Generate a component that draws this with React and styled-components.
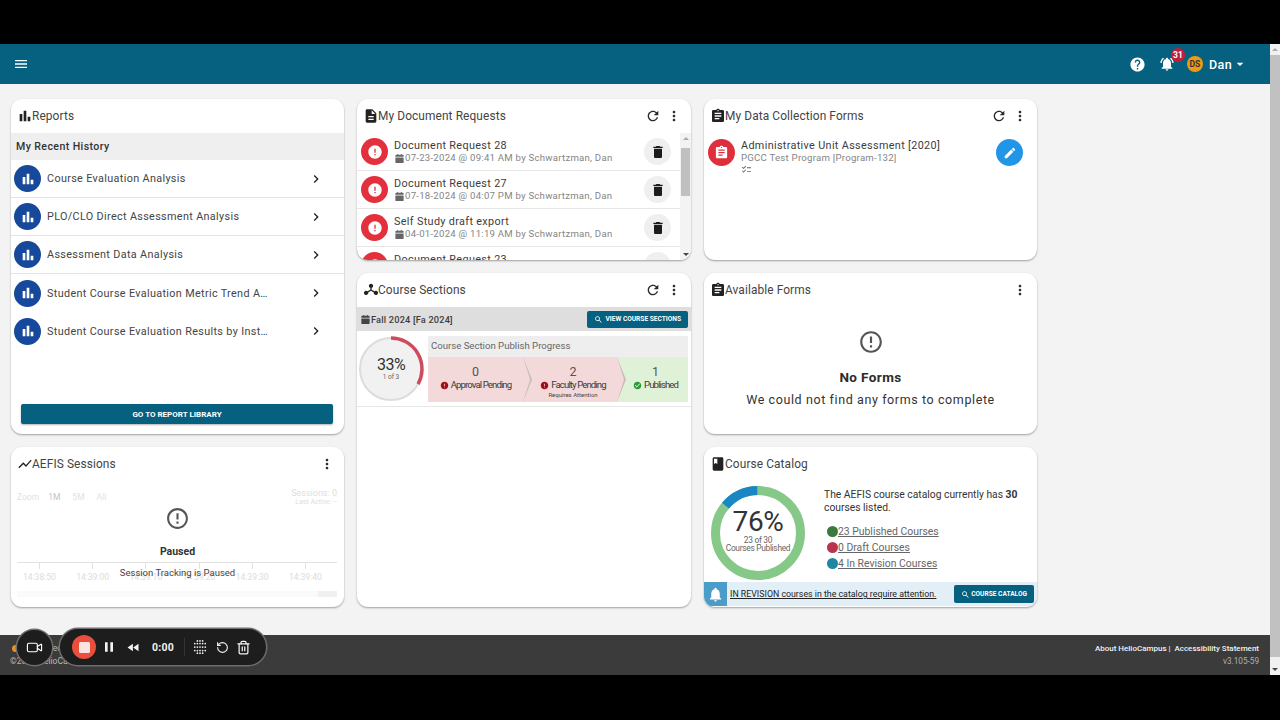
import React from 'react';
import styled, { createGlobalStyle } from 'styled-components';
import { Video, RotateCcw, Trash2 } from 'lucide-react';

const GlobalStyle = createGlobalStyle`
  html, body { margin: 0; padding: 0; height: 720px; overflow: hidden; background: #000; }
  * { box-sizing: border-box; }
  body { font-family: Roboto, "Liberation Sans", sans-serif; color: #333; }
`;

const PATHS = {
  menu: 'M3 18h18v-2H3v2zm0-5h18v-2H3v2zm0-7v2h18V6H3z',
  bars: 'M4 9h4v11H4zM10 4h4v16h-4zM16 13h4v7h-4z',
  doc: 'M14 2H6c-1.1 0-1.99.9-1.99 2L4 20c0 1.1.89 2 1.99 2H18c1.1 0 2-.9 2-2V8l-6-6zm2 16H8v-2h8v2zm0-4H8v-2h8v2zm-3-5V3.5L18.5 9H13z',
  refresh: 'M17.65 6.35C16.2 4.9 14.21 4 12 4c-4.42 0-7.99 3.58-7.99 8s3.57 8 7.99 8c3.73 0 6.84-2.55 7.73-6h-2.08c-.82 2.33-3.04 4-5.65 4-3.31 0-6-2.69-6-6s2.69-6 6-6c1.66 0 3.14.69 4.22 1.78L13 11h7V4l-2.35 2.35z',
  more: 'M12 8c1.1 0 2-.9 2-2s-.9-2-2-2-2 .9-2 2 .9 2 2 2zm0 2c-1.1 0-2 .9-2 2s.9 2 2 2 2-.9 2-2-.9-2-2-2zm0 6c-1.1 0-2 .9-2 2s.9 2 2 2 2-.9 2-2-.9-2-2-2z',
  clipboard: 'M19 3h-4.18C14.4 1.84 13.3 1 12 1c-1.3 0-2.4.84-2.82 2H5c-1.1 0-2 .9-2 2v14c0 1.1.9 2 2 2h14c1.1 0 2-.9 2-2V5c0-1.1-.9-2-2-2zm-7 0c.55 0 1 .45 1 1s-.45 1-1 1-1-.45-1-1 .45-1 1-1zm2 14H7v-2h7v2zm3-4H7v-2h10v2zm0-4H7V7h10v2z',
  trash: 'M6 19c0 1.1.9 2 2 2h8c1.1 0 2-.9 2-2V7H6v12zM19 4h-3.5l-1-1h-5l-1 1H5v2h14V4z',
  chevron: 'M10 6L8.59 7.41 13.17 12l-4.58 4.59L10 18l6-6z',
  error: 'M12 2C6.48 2 2 6.48 2 12s4.48 10 10 10 10-4.48 10-10S17.52 2 12 2zm1 15h-2v-2h2v2zm0-4h-2V7h2v6z',
  errorOutline: 'M11 15h2v2h-2zm0-8h2v6h-2zm.99-5C6.47 2 2 6.48 2 12s4.47 10 9.99 10C17.52 22 22 17.52 22 12S17.52 2 11.99 2zM12 20c-4.42 0-8-3.58-8-8s3.58-8 8-8 8 3.58 8 8-3.58 8-8 8z',
  edit: 'M3 17.25V21h3.75L17.81 9.94l-3.75-3.75L3 17.25zM20.71 7.04c.39-.39.39-1.02 0-1.41l-2.34-2.34c-.39-.39-1.02-.39-1.41 0l-1.83 1.83 3.75 3.75 1.83-1.83z',
  calendar: 'M7 2h2v2h6V2h2v2h2c1.1 0 2 .9 2 2v2H3V6c0-1.1.9-2 2-2h2V2zM3 10h18v10c0 1.1-.9 2-2 2H5c-1.1 0-2-.9-2-2V10z',
  search: 'M15.5 14h-.79l-.28-.27C15.41 12.59 16 11.11 16 9.5 16 5.91 13.09 3 9.5 3S3 5.91 3 9.5 5.91 16 9.5 16c1.61 0 3.09-.59 4.23-1.57l.27.28v.79l5 4.99L20.49 19l-4.99-5zm-6 0C7.01 14 5 11.99 5 9.5S7.01 5 9.5 5 14 7.01 14 9.5 11.99 14 9.5 14z',
  bell: 'M12 22c1.1 0 2-.9 2-2h-4c0 1.1.89 2 2 2zm6-6v-5c0-3.07-1.64-5.64-4.5-6.32V4c0-.83-.67-1.5-1.5-1.5s-1.5.67-1.5 1.5v.68C7.63 5.36 6 7.92 6 11v5l-2 2v1h16v-1l-2-2z',
  bellRing: 'M12 22c1.1 0 2-.9 2-2h-4c0 1.1.89 2 2 2zm6-6v-5c0-3.07-1.64-5.64-4.5-6.32V4c0-.83-.67-1.5-1.5-1.5s-1.5.67-1.5 1.5v.68C7.63 5.36 6 7.92 6 11v5l-2 2v1h16v-1l-2-2zM7.58 4.08L6.15 2.65C3.75 4.48 2.17 7.3 2.03 10.5h2c.15-2.65 1.51-4.97 3.55-6.42zM19.97 10.5h2c-.15-3.2-1.73-6.02-4.12-7.85l-1.42 1.43c2.02 1.45 3.39 3.77 3.54 6.42z',
  help: 'M12 2C6.48 2 2 6.48 2 12s4.48 10 10 10 10-4.48 10-10S17.52 2 12 2zm1 17h-2v-2h2v2zm2.07-7.75l-.9.92C13.45 12.9 13 13.5 13 15h-2v-.5c0-1.1.45-2.1 1.17-2.83l1.24-1.26c.37-.36.59-.86.59-1.41 0-1.1-.9-2-2-2s-2 .9-2 2H8c0-2.21 1.79-4 4-4s4 1.79 4 4c0 .88-.36 1.68-.93 2.25z',
  trend: 'M3.5 18.49l6-6.01 4 4L22 6.92l-1.41-1.41-7.09 7.97-4-4L2 16.99z',
  book: 'M18 2H6c-1.1 0-2 .9-2 2v16c0 1.1.9 2 2 2h12c1.1 0 2-.9 2-2V4c0-1.1-.9-2-2-2zM6 4h5v8l-2.5-1.5L6 12V4z',
  check: 'M12 2C6.48 2 2 6.48 2 12s4.48 10 10 10 10-4.48 10-10S17.52 2 12 2zm-2 15l-5-5 1.41-1.41L10 14.17l7.59-7.59L19 8l-9 9z',
  list: 'M22 7h-9v2h9V7zm0 8h-9v2h9v-2zM5.54 11L2 7.46l1.41-1.41 2.12 2.12 4.24-4.24 1.41 1.41L5.54 11zm0 8L2 15.46l1.41-1.41 2.12 2.12 4.24-4.24 1.41 1.41L5.54 19z',
  hub: 'M12 2.5a3.2 3.2 0 0 1 1 6.24V11.5l4.2 2.4a3.2 3.2 0 1 1-1 1.74L12 13.2l-4.2 2.44a3.2 3.2 0 1 1-1-1.74l4.2-2.4V8.74A3.2 3.2 0 0 1 12 2.5z',
  caret: 'M7 10l5 5 5-5z',
  pause: 'M6 5h4v14H6zM14 5h4v14h-4z',
  rewind: 'M11 18V6l-8.5 6 8.5 6zm.5-6l8.5 6V6l-8.5 6z',
};

const Svg = styled.svg`
  display: block;
  flex: none;
  width: ${(p) => p.$size || 16}px;
  height: ${(p) => p.$size || 16}px;
  fill: ${(p) => p.$color || 'currentColor'};
`;

const Icon = ({ name, size, color }) => (
  <Svg viewBox="0 0 24 24" $size={size} $color={color}>
    <path d={PATHS[name]} />
  </Svg>
);

const Screen = styled.div`
  width: 1280px;
  height: 720px;
  padding: 44px 0 45px;
  background: #000;
  position: relative;
  overflow: hidden;
`;

const Frame = styled.div`
  height: 631px;
  display: flex;
  background: #f3f3f3;
`;

const Main = styled.div`
  flex: 1;
  min-width: 0;
  display: flex;
  flex-direction: column;
`;

const TopBar = styled.header`
  height: 40px;
  flex: none;
  background: #06607f;
  color: #fff;
  display: flex;
  align-items: center;
  padding: 0 22px 0 13px;
`;

const TopSpacer = styled.div`
  flex: 1;
`;

const HelpButton = styled.div`
  margin-right: 13px;
`;

const BellWrap = styled.div`
  position: relative;
  margin-right: 12px;
`;

const Badge = styled.span`
  position: absolute;
  top: -8px;
  left: 12px;
  width: 14px;
  height: 14px;
  border-radius: 50%;
  background: #c0203a;
  color: #fff;
  font-size: 8.5px;
  font-weight: 700;
  display: flex;
  align-items: center;
  justify-content: center;
`;

const Avatar = styled.span`
  width: 16px;
  height: 16px;
  border-radius: 50%;
  background: #ee9a17;
  color: #333;
  font-size: 8.5px;
  font-weight: 700;
  display: flex;
  align-items: center;
  justify-content: center;
  margin-right: 6px;
`;

const UserName = styled.span`
  font-size: 12.5px;
  font-weight: 500;
  letter-spacing: 0.4px;
`;

const Grid = styled.main`
  flex: 1;
  display: grid;
  grid-template-columns: 333px 334px 333px;
  grid-template-rows: 161px 161px 160px;
  column-gap: 13px;
  row-gap: 13px;
  padding: 15px 0 0 11px;
`;

const Card = styled.section`
  background: #fff;
  border-radius: 11px;
  box-shadow: 0 1px 2px rgba(0, 0, 0, 0.35);
  overflow: hidden;
  display: flex;
  flex-direction: column;
  position: relative;
  grid-row: ${(p) => p.$row || 'auto'};
  grid-column: ${(p) => p.$col};
`;

const CardHead = styled.div`
  height: 34px;
  flex: none;
  display: flex;
  align-items: center;
  padding: 0 7px 1px 6px;
  color: #222;
`;

const CardTitle = styled.h2`
  margin: 0 0 0 -1px;
  flex: 1;
  font-size: 11.9px;
  font-weight: 400;
  letter-spacing: 0.1px;
  color: #444;
`;

const HeadAction = styled.span`
  width: 21px;
  display: flex;
  justify-content: center;
  color: #2a2a2a;
`;

const HistoryLabel = styled.div`
  height: 27px;
  flex: none;
  background: #efefef;
  padding-left: 5px;
  font-size: 10.6px;
  font-weight: 500;
  letter-spacing: 0.4px;
  line-height: 27px;
  color: #333;
`;

const ReportRow = styled.div`
  height: 38px;
  flex: none;
  display: flex;
  align-items: center;
  padding: 0 20px 0 3px;
  border-bottom: 1px solid #e4e4e4;
  &:nth-of-type(n + 6) {
    border-bottom: none;
  }
`;

const RoundIcon = styled.span`
  width: 27px;
  height: 27px;
  flex: none;
  border-radius: 50%;
  background: ${(p) => p.$bg};
  color: ${(p) => p.$fg || '#fff'};
  display: flex;
  align-items: center;
  justify-content: center;
`;

const ReportName = styled.span`
  flex: 1;
  min-width: 0;
  margin: 0 37px 0 6px;
  font-size: 10.8px;
  line-height: 13px;
  letter-spacing: 0.35px;
  color: #444;
  white-space: nowrap;
  overflow: hidden;
  text-overflow: ellipsis;
`;

const ReportFoot = styled.div`
  margin-top: auto;
  padding: 0 11px 10px 10px;
`;

const WideButton = styled.div`
  height: 20px;
  background: #06607f;
  border-radius: 2px;
  color: #fff;
  font-size: 8px;
  font-weight: 700;
  display: flex;
  align-items: center;
  justify-content: center;
  box-shadow: 0 1px 2px rgba(0, 0, 0, 0.3);
`;

const ScrollArea = styled.div`
  flex: 1;
  min-height: 0;
  display: flex;
`;

const RequestList = styled.div`
  flex: 1;
  min-width: 0;
  overflow: hidden;
`;

const RequestRow = styled.div`
  height: 38px;
  display: flex;
  align-items: center;
  padding: 0 9px 0 4px;
  border-bottom: 1px solid #e6e6e6;
`;

const FormRow = styled.div`
  display: flex;
  align-items: flex-start;
  padding: 6px 14px 0 4px;
`;

const RequestText = styled.div`
  flex: 1;
  min-width: 0;
  margin-left: 6px;
`;

const RequestTitle = styled.div`
  font-size: 10.8px;
  letter-spacing: 0.35px;
  line-height: 13px;
  color: #3c3c3c;
`;

const RequestMeta = styled.div`
  display: flex;
  align-items: center;
  font-size: 9.6px;
  letter-spacing: 0.25px;
  line-height: 12px;
  color: #858585;
`;

const ScrollTrack = styled.div`
  width: 11px;
  flex: none;
  background: #f3f3f3;
  display: flex;
  flex-direction: column;
  align-items: center;
`;

const ScrollThumb = styled.div`
  width: 9px;
  height: 48px;
  margin-top: 8px;
  background: #c0c0c0;
`;

const TrackArrow = styled.span`
  width: 0;
  height: 0;
  margin-top: ${(p) => (p.$down ? 'auto' : '4px')};
  margin-bottom: ${(p) => (p.$down ? '4px' : '0')};
  border-left: 3px solid transparent;
  border-right: 3px solid transparent;
  border-bottom: ${(p) => (p.$down ? 'none' : '3px solid #aaa')};
  border-top: ${(p) => (p.$down ? '3px solid #444' : 'none')};
`;

const TermBar = styled.div`
  height: 24px;
  flex: none;
  background: #dedede;
  display: flex;
  align-items: center;
  justify-content: space-between;
  padding: 0 3px;
  color: #3c3c3c;
`;

const TermLabel = styled.span`
  display: flex;
  align-items: center;
  font-size: 9.2px;
  font-weight: 500;
  letter-spacing: 0.2px;
`;

const SmallButton = styled.span`
  height: ${(p) => p.$h || 17}px;
  padding: 0 ${(p) => p.$pad || 7}px;
  background: #06607f;
  border-radius: 2px;
  color: #fff;
  font-size: 6.6px;
  font-weight: 700;
  display: flex;
  align-items: center;
  gap: ${(p) => p.$gap || 3}px;
  white-space: nowrap;
`;

const ProgressRow = styled.div`
  display: flex;
  align-items: flex-start;
  padding: 5px 3px 5px 1px;
  border-bottom: 1px solid #e6e6e6;
  height: 76px;
  flex: none;
`;

const Ring = styled.div`
  width: ${(p) => p.$size}px;
  height: ${(p) => p.$size}px;
  flex: none;
  position: relative;
`;

const RingLabel = styled.div`
  position: absolute;
  inset: 0;
  display: flex;
  flex-direction: column;
  align-items: center;
  justify-content: center;
  color: #333;
`;

const RingValue = styled.span`
  font-size: ${(p) => p.$size}px;
  line-height: 1;
  letter-spacing: ${(p) => p.$track || '-0.5px'};
  margin-top: ${(p) => p.$top || 0}px;
`;

const RingNote = styled.span`
  font-size: ${(p) => p.$size || 6.5}px;
  line-height: ${(p) => p.$line || '9px'};
  letter-spacing: ${(p) => p.$track || '0'};
  color: #666;
  text-align: center;
`;

const ProgressPanel = styled.div`
  flex: 1;
  margin-left: 4px;
  height: 66px;
  background: #eee;
  display: flex;
  flex-direction: column;
`;

const ProgressTitle = styled.div`
  height: 21px;
  flex: none;
  font-size: 9.6px;
  line-height: 20px;
  color: #666;
  padding-left: 3px;
`;

const Steps = styled.div`
  flex: 1;
  display: grid;
  grid-template-columns: 95px 94px 71px;
`;

const Step = styled.div`
  position: relative;
  background: ${(p) => (p.$done ? '#dff2d8' : '#f3d9d9')};
  color: #444;
  display: flex;
  flex-direction: column;
  align-items: center;
  padding-top: 8px;
  & + & {
    padding-left: 6px;
  }
  &::before,
  &::after {
    content: '';
    display: ${(p) => (p.$done ? 'none' : 'block')};
    position: absolute;
    top: 0;
    bottom: 0;
    z-index: 1;
    clip-path: polygon(0 0, 100% 50%, 0 100%);
  }
  &::before {
    right: -9px;
    width: 9px;
    background: #c9bcbc;
  }
  &::after {
    right: -7px;
    width: 7px;
    background: #f3d9d9;
  }
`;

const StepCount = styled.span`
  font-size: 12.5px;
  line-height: 14px;
  color: #555;
`;

const StepName = styled.span`
  display: flex;
  align-items: center;
  gap: 2px;
  font-size: 9.6px;
  line-height: 12px;
  letter-spacing: -0.9px;
  color: #3a3a3a;
`;

const StepHint = styled.span`
  font-size: 6px;
  line-height: 8px;
  color: #444;
`;

const EmptyState = styled.div`
  flex: 1;
  display: flex;
  flex-direction: column;
  align-items: center;
  padding-top: 22px;
`;

const EmptyTitle = styled.div`
  margin-top: 14px;
  font-size: 13.5px;
  font-weight: 700;
  letter-spacing: 0.4px;
  color: #2c2c2c;
`;

const EmptyText = styled.div`
  margin-top: 7px;
  font-size: 12.5px;
  letter-spacing: 0.6px;
  color: #333;
`;

const SessionBody = styled.div`
  flex: 1;
  position: relative;
  padding: 7px 7px 0 6px;
`;

const FaintRow = styled.div`
  display: flex;
  justify-content: space-between;
  font-size: 8.5px;
`;

const ZoomGroup = styled.div`
  display: flex;
  gap: 12px;
  padding-top: 4px;
`;

const ZoomItem = styled.span`
  color: ${(p) => (p.$on ? '#c4c4c4' : '#e2e2e2')};
  &:first-child {
    margin-right: -3px;
  }
`;

const SessionCount = styled.div`
  text-align: right;
  font-size: 9px;
  line-height: 10px;
  color: #e0e0e0;
`;

const SessionSub = styled.div`
  font-size: 7px;
  line-height: 8px;
`;

const Axis = styled.div`
  margin-top: 56px;
  border-top: 1px solid #e2e2e2;
  display: grid;
  grid-template-columns: repeat(6, 53.2px);
  padding-left: 6px;
`;

const Tick = styled.span`
  font-size: 8.5px;
  color: #dcdcdc;
  padding-top: 9px;
  position: relative;
  &::before {
    content: '';
    position: absolute;
    top: 0;
    left: 16px;
    width: 1px;
    height: 6px;
    background: #e2e2e2;
  }
`;

const RangeBar = styled.div`
  margin-top: 9px;
  height: 6px;
  background: linear-gradient(to right, #fafafa 0 94%, #f0f0f0 94%);
`;

const PausedOverlay = styled.div`
  position: absolute;
  inset: 0;
  display: flex;
  flex-direction: column;
  align-items: center;
  padding-top: 25px;
`;

const PausedTitle = styled.div`
  margin-top: 14px;
  font-size: 10.5px;
  font-weight: 700;
  color: #333;
`;

const PausedText = styled.div`
  margin-top: 9px;
  font-size: 9.5px;
  color: #444;
`;

const CatalogBody = styled.div`
  flex: 1;
  min-height: 0;
  display: flex;
  padding: 5px 6px 0 7px;
`;

const CatalogInfo = styled.div`
  margin-left: 19px;
  padding-top: 2px;
  flex: 1;
  min-width: 0;
`;

const CatalogText = styled.p`
  margin: 0 0 9px;
  font-size: 10.3px;
  line-height: 13px;
  color: #333;
`;

const CatalogLink = styled.div`
  display: flex;
  align-items: center;
  height: 16px;
  padding-left: 3px;
  font-size: 10.4px;
  color: #666;
  text-decoration: underline;
`;

const Dot = styled.span`
  width: 11px;
  height: 11px;
  flex: none;
  border-radius: 50%;
  background: ${(p) => p.$color};
`;

const RevisionBar = styled.div`
  height: 24px;
  flex: none;
  margin-bottom: 1px;
  background: #e2eff6;
  display: flex;
  align-items: center;
  padding-right: 3px;
`;

const RevisionIcon = styled.span`
  width: 23px;
  height: 24px;
  background: #4a9cc9;
  color: #fff;
  display: flex;
  align-items: center;
  justify-content: center;
`;

const RevisionText = styled.span`
  flex: 1;
  margin-left: 3px;
  font-size: 8.8px;
  color: #222;
  text-decoration: underline;
`;

const Footer = styled.footer`
  height: 40px;
  flex: none;
  background: #3b3b3b;
  color: #fff;
  display: flex;
  justify-content: space-between;
  padding: 7px 11px 0 10px;
`;

const FooterLeft = styled.div`
  font-size: 8.5px;
  line-height: 13px;
  color: #b9b9b9;
`;

const PoweredLine = styled.div`
  display: flex;
  align-items: center;
  gap: 10px;
  height: 13px;
  padding-left: 2px;
`;

const Flame = styled.span`
  width: 7px;
  height: 7px;
  border-radius: 50%;
  background: #e6952a;
`;

const FooterRight = styled.div`
  text-align: right;
  font-size: 8px;
  line-height: 13px;
`;

const FooterLinks = styled.div`
  font-weight: 500;
  color: #f1f1f1;
`;

const Version = styled.div`
  font-size: 8.2px;
  color: #b0b0b0;
`;

const PageScroll = styled.div`
  width: 10px;
  flex: none;
  background: #f1f1f1;
  display: flex;
  flex-direction: column;
  align-items: center;
`;

const PageThumb = styled.div`
  width: 100%;
  height: 602px;
  margin-top: 4px;
  background: #c1c1c1;
`;

const Recorder = styled.div`
  position: absolute;
  left: 17px;
  top: 629px;
  display: flex;
  align-items: center;
  gap: 8px;
`;

const CameraButton = styled.div`
  width: 35px;
  height: 35px;
  border-radius: 50%;
  background: #1d1d1d;
  box-shadow: 0 0 0 1.5px #6d6d6d;
  color: #fff;
  display: flex;
  align-items: center;
  justify-content: center;
`;

const RecorderPill = styled.div`
  width: 206px;
  height: 36px;
  border-radius: 18px;
  background: #1d1d1d;
  box-shadow: 0 0 0 1.5px #6d6d6d;
  color: #f2f2f2;
  display: flex;
  align-items: center;
  padding-left: 12px;
`;

const StopButton = styled.div`
  width: 24px;
  height: 24px;
  border-radius: 50%;
  background: #ea4f3d;
  display: flex;
  align-items: center;
  justify-content: center;
  &::after {
    content: '';
    width: 11px;
    height: 11px;
    border-radius: 1.5px;
    background: #fbe4e0;
  }
`;

const PillSlot = styled.span`
  width: ${(p) => p.$w}px;
  margin-left: ${(p) => p.$ml || 0}px;
  display: flex;
  justify-content: center;
`;

const Timer = styled.span`
  width: 30px;
  margin-left: 4px;
  font-size: 10.5px;
  font-weight: 700;
  letter-spacing: 0.2px;
  text-align: center;
`;

const PillDivider = styled.span`
  width: 1px;
  height: 18px;
  margin-left: 6px;
  background: #333;
`;

const reports = [
  'Course Evaluation Analysis',
  'PLO/CLO Direct Assessment Analysis',
  'Assessment Data Analysis',
  'Student Course Evaluation Metric Trend Analysis',
  'Student Course Evaluation Results by Instructor',
];

const requests = [
  { name: 'Document Request 28', when: '07-23-2024 @ 09:41 AM by Schwartzman, Dan' },
  { name: 'Document Request 27', when: '07-18-2024 @ 04:07 PM by Schwartzman, Dan' },
  { name: 'Self Study draft export', when: '04-01-2024 @ 11:19 AM by Schwartzman, Dan' },
  { name: 'Document Request 23', when: '03-12-2024 @ 02:30 PM by Schwartzman, Dan' },
];

const ticks = ['14:38:50', '14:39:00', '14:39:10', '14:39:20', '14:39:30', '14:39:40'];

// recorder grid icon, rows of dots narrowing at top and bottom
const gripDots = [
  [5, 1], [8, 1], [11, 1],
  [2, 4], [5, 4], [8, 4], [11, 4], [14, 4],
  [2, 8], [5, 8], [8, 8], [11, 8], [14, 8],
  [2, 12], [5, 12], [8, 12], [11, 12], [14, 12],
  [5, 15], [8, 15], [11, 15],
];

const arc = (cx, cy, r, from, to) => {
  const p = (a) => [cx + r * Math.sin(a * Math.PI / 180), cy - r * Math.cos(a * Math.PI / 180)];
  const [x1, y1] = p(from);
  const [x2, y2] = p(to);
  return `M${x1} ${y1}A${r} ${r} 0 ${to - from > 180 ? 1 : 0} 1 ${x2} ${y2}`;
};

const Head = ({ icon, title, refresh, more = true }) => (
  <CardHead>
    <Icon name={icon} size={16} />
    <CardTitle>{title}</CardTitle>
    {refresh && <HeadAction><Icon name="refresh" size={16} /></HeadAction>}
    {more && <HeadAction><Icon name="more" size={16} /></HeadAction>}
  </CardHead>
);

export default function App() {
  return (
    <Screen>
      <GlobalStyle />
      <Frame>
        <Main>
          <TopBar>
            <Icon name="menu" size={16} />
            <TopSpacer />
            <HelpButton><Icon name="help" size={17} /></HelpButton>
            <BellWrap>
              <Icon name="bellRing" size={16} />
              <Badge>31</Badge>
            </BellWrap>
            <Avatar>DS</Avatar>
            <UserName>Dan</UserName>
            <Icon name="caret" size={16} />
          </TopBar>

          <Grid>
            <Card $row="1 / span 2" $col="1">
              <Head icon="bars" title="Reports" more={false} />
              <HistoryLabel>My Recent History</HistoryLabel>
              {reports.map((r) => (
                <ReportRow key={r}>
                  <RoundIcon $bg="#16499b"><Icon name="bars" size={16} /></RoundIcon>
                  <ReportName>{r}</ReportName>
                  <Icon name="chevron" size={16} color="#222" />
                </ReportRow>
              ))}
              <ReportFoot>
                <WideButton>GO TO REPORT LIBRARY</WideButton>
              </ReportFoot>
            </Card>

            <Card $col="2">
              <Head icon="doc" title="My Document Requests" refresh />
              <ScrollArea>
                <RequestList>
                  {requests.map((r) => (
                    <RequestRow key={r.name}>
                      <RoundIcon $bg="#e3303c"><Icon name="error" size={16} /></RoundIcon>
                      <RequestText>
                        <RequestTitle>{r.name}</RequestTitle>
                        <RequestMeta>
                          <Icon name="calendar" size={11} color="#666" />
                          {r.when}
                        </RequestMeta>
                      </RequestText>
                      <RoundIcon $bg="#efefef" $fg="#1c1c1c"><Icon name="trash" size={16} /></RoundIcon>
                    </RequestRow>
                  ))}
                </RequestList>
                <ScrollTrack>
                  <TrackArrow />
                  <ScrollThumb />
                  <TrackArrow $down />
                </ScrollTrack>
              </ScrollArea>
            </Card>

            <Card $col="3">
              <Head icon="clipboard" title="My Data Collection Forms" refresh />
              <FormRow>
                <RoundIcon $bg="#e02f3c"><Icon name="clipboard" size={15} /></RoundIcon>
                <RequestText>
                  <RequestTitle>Administrative Unit Assessment [2020]</RequestTitle>
                  <RequestMeta>PGCC Test Program [Program-132]</RequestMeta>
                  <Icon name="list" size={11} color="#666" />
                </RequestText>
                <RoundIcon $bg="#2196e8"><Icon name="edit" size={14} /></RoundIcon>
              </FormRow>
            </Card>

            <Card $row="2 / span 2" $col="2">
              <Head icon="hub" title="Course Sections" refresh />
              <TermBar>
                <TermLabel>
                  <Icon name="calendar" size={11} color="#444" />
                  Fall 2024 [Fa 2024]
                </TermLabel>
                <SmallButton>
                  <Icon name="search" size={9} />
                  VIEW COURSE SECTIONS
                </SmallButton>
              </TermBar>
              <ProgressRow>
                <Ring $size={66}>
                  <svg width="66" height="66" viewBox="0 0 66 66">
                    <circle cx="33" cy="33" r="31" fill="#f1f1f1" stroke="#dcdcdc" strokeWidth="2" />
                    <path d={arc(33, 33, 31, 0, 119)} fill="none" stroke="#cf4a5a" strokeWidth="3.5" />
                  </svg>
                  <RingLabel>
                    <RingValue $size={16}>33%</RingValue>
                    <RingNote>1 of 3</RingNote>
                  </RingLabel>
                </Ring>
                <ProgressPanel>
                  <ProgressTitle>Course Section Publish Progress</ProgressTitle>
                  <Steps>
                    <Step>
                      <StepCount>0</StepCount>
                      <StepName><Icon name="error" size={9} color="#a10f1c" />Approval Pending</StepName>
                    </Step>
                    <Step>
                      <StepCount>2</StepCount>
                      <StepName><Icon name="error" size={9} color="#a10f1c" />Faculty Pending</StepName>
                      <StepHint>Requires Attention</StepHint>
                    </Step>
                    <Step $done>
                      <StepCount>1</StepCount>
                      <StepName><Icon name="check" size={9} color="#2a9a3d" />Published</StepName>
                    </Step>
                  </Steps>
                </ProgressPanel>
              </ProgressRow>
            </Card>

            <Card $col="3">
              <Head icon="clipboard" title="Available Forms" />
              <EmptyState>
                <Icon name="errorOutline" size={26} color="#555" />
                <EmptyTitle>No Forms</EmptyTitle>
                <EmptyText>We could not find any forms to complete</EmptyText>
              </EmptyState>
            </Card>

            <Card $col="1">
              <Head icon="trend" title="AEFIS Sessions" />
              <SessionBody>
                <FaintRow>
                  <ZoomGroup>
                    <ZoomItem>Zoom</ZoomItem>
                    <ZoomItem $on>1M</ZoomItem>
                    <ZoomItem>5M</ZoomItem>
                    <ZoomItem>All</ZoomItem>
                  </ZoomGroup>
                  <SessionCount>
                    Sessions: 0
                    <SessionSub>Last Active: --</SessionSub>
                  </SessionCount>
                </FaintRow>
                <Axis>
                  {ticks.map((t) => <Tick key={t}>{t}</Tick>)}
                </Axis>
                <RangeBar />
                <PausedOverlay>
                  <Icon name="errorOutline" size={25} color="#555" />
                  <PausedTitle>Paused</PausedTitle>
                  <PausedText>Session Tracking is Paused</PausedText>
                </PausedOverlay>
              </SessionBody>
            </Card>

            <Card $col="3">
              <Head icon="book" title="Course Catalog" more={false} />
              <CatalogBody>
                <Ring $size={94}>
                  <svg width="94" height="94" viewBox="0 0 94 94">
                    <circle cx="47" cy="47" r="42.5" fill="none" stroke="#86c887" strokeWidth="9" />
                    <path d={arc(47, 47, 42.5, 310, 359)} fill="none" stroke="#1a86c4" strokeWidth="9" />
                  </svg>
                  <RingLabel>
                    <RingValue $size={28} $track="-0.3px" $top={-6}>76%</RingValue>
                    <RingNote $size={8.4} $line="8px" $track="-0.3px">23 of 30<br />Courses Published</RingNote>
                  </RingLabel>
                </Ring>
                <CatalogInfo>
                  <CatalogText>The AEFIS course catalog currently has <b>30</b> courses listed.</CatalogText>
                  <CatalogLink><Dot $color="#3a7a3e" />23 Published Courses</CatalogLink>
                  <CatalogLink><Dot $color="#b8354f" />0 Draft Courses</CatalogLink>
                  <CatalogLink><Dot $color="#1f86a3" />4 In Revision Courses</CatalogLink>
                </CatalogInfo>
              </CatalogBody>
              <RevisionBar>
                <RevisionIcon><Icon name="bell" size={17} /></RevisionIcon>
                <RevisionText>IN REVISION courses in the catalog require attention.</RevisionText>
                <SmallButton $h={18} $pad={7} $gap={1}>
                  <Icon name="search" size={9} />
                  COURSE CATALOG
                </SmallButton>
              </RevisionBar>
            </Card>
          </Grid>

          <Footer>
            <FooterLeft>
              <PoweredLine><Flame />Powered by HelioCampus</PoweredLine>
              <div>©2024 HelioCampus, Inc. All rights reserved.</div>
            </FooterLeft>
            <FooterRight>
              <FooterLinks>About HelioCampus |&nbsp; Accessibility Statement</FooterLinks>
              <Version>v3.105-59</Version>
            </FooterRight>
          </Footer>
        </Main>
        <PageScroll>
          <TrackArrow />
          <PageThumb />
          <TrackArrow $down />
        </PageScroll>
      </Frame>

      <Recorder>
        <CameraButton><Video size={17} strokeWidth={1.6} /></CameraButton>
        <RecorderPill>
          <StopButton />
          <PillSlot $w={26}><Icon name="pause" size={16} /></PillSlot>
          <PillSlot $w={22}><Icon name="rewind" size={15} /></PillSlot>
          <Timer>0:00</Timer>
          <PillDivider />
          <PillSlot $w={22} $ml={4}>
            <svg width="14" height="14" viewBox="0 0 16 16" fill="currentColor">
              {gripDots.map(([x, y]) => <circle key={`${x}-${y}`} cx={x} cy={y} r="1" />)}
            </svg>
          </PillSlot>
          <PillSlot $w={22}><RotateCcw size={13} /></PillSlot>
          <PillSlot $w={20}><Trash2 size={15} /></PillSlot>
        </RecorderPill>
      </Recorder>
    </Screen>
  );
}
